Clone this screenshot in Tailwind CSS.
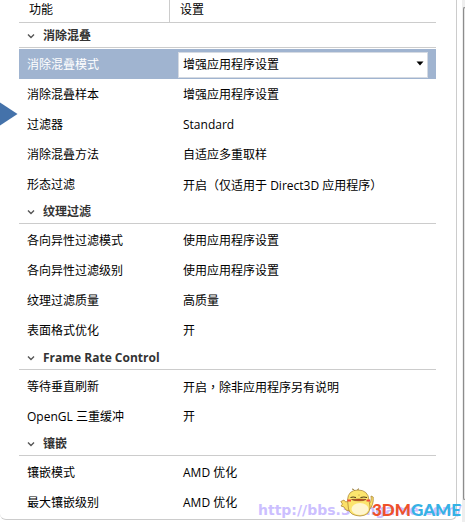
<!DOCTYPE html>
<html lang="zh-CN">
<head>
    <meta charset="UTF-8">
    <meta name="viewport" content="width=device-width, initial-scale=1.0">
    <title>3D 应用程序设置</title>
    <script src="https://cdn.jsdelivr.net/npm/@tailwindcss/browser@4"></script>
</head>
<body class="bg-white text-black text-[12px] leading-4 font-['Open_Sans','Noto_Sans_CJK_SC',sans-serif] overflow-hidden">

<div class="relative flex h-screen">

    <!-- Settings panel -->
    <main class="flex-1 h-[520px] pl-[19px] pr-5 border-r border-b border-[#cccccc] rounded-b-md">
        <table class="w-full table-fixed border-separate border-spacing-0 text-left">
            <colgroup>
                <col class="w-[151px]">
                <col>
            </colgroup>
            <thead>
                <tr class="h-[23px]">
                    <th class="pl-[10px] pb-0.5 font-normal border-b border-r border-[#cccccc]">功能</th>
                    <th class="pl-[10px] pb-0.5 font-normal border-b border-[#cccccc]">设置</th>
                </tr>
            </thead>

            <!-- Anti-aliasing -->
            <tbody class="[&_td]:pt-0.5">
                <tr>
                    <th colspan="2" class="p-0 pb-px">
                        <button class="flex items-center gap-2 w-full h-[25px] pt-0.5 pl-2 border-b border-[#cccccc] font-bold text-[#333333]">
                            <svg class="w-2 h-2" viewBox="0 0 8 8" fill="none" stroke="#555555" stroke-width="1.4"><path d="M1 2.5L4 5.5L7 2.5"/></svg>
                            消除混叠
                        </button>
                    </th>
                </tr>
                <tr class="h-[30px] bg-[#a0b4d0]">
                    <td class="pl-2 text-white"><label for="aa-mode">消除混叠模式</label></td>
                    <td class="relative pl-2 pr-2">
                        <select id="aa-mode" class="block appearance-none w-full h-[26px] pl-1 bg-white border border-[#d5dae2]">
                            <option>增强应用程序设置</option>
                            <option>使用应用程序设置</option>
                        </select>
                        <svg class="absolute right-3 top-3 w-2 h-[5px] pointer-events-none" viewBox="0 0 8 5"><path d="M0.5 0.5H7.5L4 4.5Z"/></svg>
                    </td>
                </tr>
                <tr class="h-[30px]"><td class="pl-2">消除混叠样本</td><td class="pl-[13px]">增强应用程序设置</td></tr>
                <tr class="h-[30px]"><td class="pl-2">过滤器</td><td class="pl-[13px]">Standard</td></tr>
                <tr class="h-[30px]"><td class="pl-2">消除混叠方法</td><td class="pl-[13px]">自适应多重取样</td></tr>
                <tr class="h-[30px]"><td class="pl-2">形态过滤</td><td class="pl-[13px]">开启<span lang="zh-TW" class="font-['Noto_Sans_CJK_TC',sans-serif]">（</span>仅适用于 Direct3D 应用程序<span lang="zh-TW" class="font-['Noto_Sans_CJK_TC',sans-serif]">）</span></td></tr>
            </tbody>

            <!-- Texture filtering -->
            <tbody class="[&_td]:pt-0.5">
                <tr>
                    <th colspan="2" class="p-0 pb-px">
                        <button class="flex items-center gap-2 w-full h-[25px] pt-0.5 pl-2 border-b border-[#cccccc] font-bold text-[#333333]">
                            <svg class="w-2 h-2" viewBox="0 0 8 8" fill="none" stroke="#555555" stroke-width="1.4"><path d="M1 2.5L4 5.5L7 2.5"/></svg>
                            纹理过滤
                        </button>
                    </th>
                </tr>
                <tr class="h-[30px]"><td class="pl-2">各向异性过滤模式</td><td class="pl-[13px]">使用应用程序设置</td></tr>
                <tr class="h-[30px]"><td class="pl-2">各向异性过滤级别</td><td class="pl-[13px]">使用应用程序设置</td></tr>
                <tr class="h-[30px]"><td class="pl-2">纹理过滤质量</td><td class="pl-[13px]">高质量</td></tr>
                <tr class="h-[30px]"><td class="pl-2">表面格式优化</td><td class="pl-[13px]">开</td></tr>
            </tbody>

            <!-- Frame rate -->
            <tbody class="[&_td]:pt-0.5">
                <tr>
                    <th colspan="2" class="p-0 pb-px">
                        <button class="flex items-center gap-2 w-full h-[25px] pt-0.5 pl-2 border-b border-[#cccccc] font-bold text-[#333333]">
                            <svg class="w-2 h-2" viewBox="0 0 8 8" fill="none" stroke="#555555" stroke-width="1.4"><path d="M1 2.5L4 5.5L7 2.5"/></svg>
                            Frame Rate Control
                        </button>
                    </th>
                </tr>
                <tr class="h-[30px]"><td class="pl-2">等待垂直刷新</td><td class="pl-[13px]">开启<span lang="zh-TW" class="font-['Noto_Sans_CJK_TC',sans-serif]">，</span>除非应用程序另有说明</td></tr>
                <tr class="h-[30px]"><td class="pl-2">OpenGL 三重缓冲</td><td class="pl-[13px]">开</td></tr>
            </tbody>

            <!-- Tessellation -->
            <tbody class="[&_td]:pt-0.5">
                <tr>
                    <th colspan="2" class="p-0 pb-px">
                        <button class="flex items-center gap-2 w-full h-[25px] pt-0.5 pl-2 border-b border-[#cccccc] font-bold text-[#333333]">
                            <svg class="w-2 h-2" viewBox="0 0 8 8" fill="none" stroke="#555555" stroke-width="1.4"><path d="M1 2.5L4 5.5L7 2.5"/></svg>
                            镶嵌
                        </button>
                    </th>
                </tr>
                <tr class="h-[30px]"><td class="pl-2">镶嵌模式</td><td class="pl-[13px]">AMD 优化</td></tr>
                <tr class="h-[30px]"><td class="pl-2">最大镶嵌级别</td><td class="pl-[13px]">AMD 优化</td></tr>
            </tbody>
        </table>
    </main>

    <!-- Scrollbar edge -->
    <div class="w-2 pl-[5px] shrink-0">
        <div class="h-full bg-[#eeeeee] pt-[7px] pl-px">
            <div class="h-[493px] bg-[#e4e4e4] border border-r-0 border-[#8c8c8c] rounded-l-xs"></div>
        </div>
    </div>

    <!-- Pointer on the left edge -->
    <svg class="absolute left-0 top-[102px] w-[18px] h-6" viewBox="0 0 18 24"><path d="M0 0.5L17.5 12L0 23.5Z" fill="#4472aa"/></svg>

    <!-- Watermark -->
    <div class="absolute right-0 bottom-0 w-[207px] h-[34px]">
        <span class="absolute left-0 top-3 font-['DejaVu_Sans',sans-serif] font-bold text-[14px] leading-5 text-[#ccbfff] whitespace-nowrap">http://bbs.3dmgame.com/</span>
        <svg class="absolute left-[82px] top-0 w-[34px] h-[30px]" viewBox="0 0 34 30">
            <path d="M15 3Q14 1 12 1M18 2.500Q17 1 19 0.8" fill="none" stroke="#8a6a20" stroke-width="0.9"/>
            <path d="M9 13Q5 15 4 12L0.8 13.5L2.5 16L1 18L4 19Q5 23 10 23Z" fill="#fbe069" stroke="#b08a3a" stroke-width="0.8"/>
            <path d="M28 17Q32 14 31 8L33.2 9Q34 17 29 22Z" fill="#fbe069" stroke="#b08a3a" stroke-width="0.8"/>
            <path d="M7.5 12Q8 2 18 2Q28 2 29 12L30 19Q30 27.500 20 28Q10 27.5 8.5 21Z" fill="#fce56e" stroke="#b08a3a" stroke-width="0.8"/>
            <ellipse cx="20" cy="21" rx="8.5" ry="6" fill="#fff6d0"/>
            <path d="M10.500 9.500Q13 8.500 16 9.500M20.500 9.500Q24 8.500 27 9.500" fill="none" stroke="#4b3b17" stroke-width="1"/>
            <path d="M7.5 12.5H11M26.500 12.500H30" stroke="#ef4936" stroke-width="1.8"/>
            <path d="M11.500 11.500Q19 10.500 26 11.500Q24 13 19 12.800Q14 13 11.500 11.500Z" fill="#c94d1c" stroke="#6b2a12" stroke-width="0.5"/>
            <circle cx="19" cy="7" r="0.6" fill="#b08a3a"/>
        </svg>
        <span class="absolute left-[114px] top-3 font-['Lato',sans-serif] font-black text-[17px] leading-5 text-[#f0512a] whitespace-nowrap">3DM<span class="text-[#35b2e4]">GAME</span></span>
    </div>

</div>

</body>
</html>
